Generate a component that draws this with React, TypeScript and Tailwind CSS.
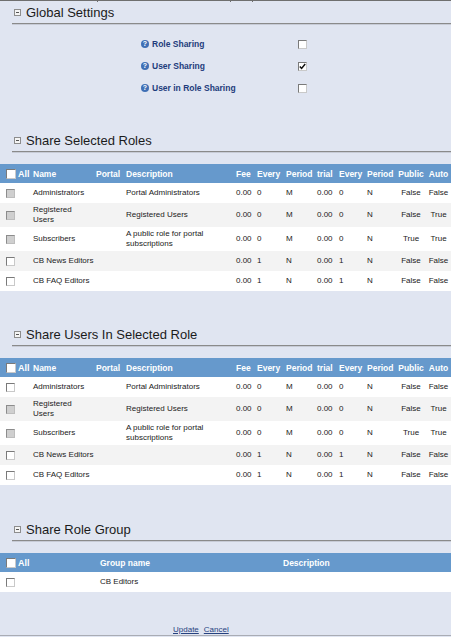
import React from "react";

type Row = {
  name: React.ReactNode;
  desc: React.ReactNode;
  fee: string;
  every: string;
  period: string;
  trial: string;
  tEvery: string;
  tPeriod: string;
  pub: string;
  auto: string;
  disabled: boolean;
};

function Box({ checked = false, disabled = false, big = false }: { checked?: boolean; disabled?: boolean; big?: boolean }) {
  const base = big ? "w-[10px] h-[10px]" : "w-[9px] h-[9px]";
  const color = disabled
    ? "bg-[#cfcfcf] border-t-[#8c8c8c] border-l-[#8c8c8c] border-r-[#bdbdbd] border-b-[#bdbdbd]"
    : "bg-white border-t-[#7a7a7a] border-l-[#7a7a7a] border-r-[#c9c9c9] border-b-[#c9c9c9]";
  return (
    <span className={`inline-flex items-center justify-center border ${base} ${color} align-middle`}>
      {checked && (
        <svg width="7" height="7" viewBox="0 0 7 7">
          <polyline points="0.8,3.4 2.6,5.4 6.2,1" fill="none" stroke="#111" strokeWidth="1.5" />
        </svg>
      )}
    </span>
  );
}

function Heading({ title }: { title: string }) {
  return (
    <div className="ml-[12px] h-[22px] border-b border-[#8a8a8a] shadow-[0_1px_0_#c7cbd6] flex items-center pl-[2px]">
      <span className="w-[7px] h-[7px] border border-[#8d8d8d] bg-[#f4f4f4] flex items-center justify-center">
        <span className="w-[3px] h-px bg-[#555]" />
      </span>
      <span className="ml-[5px] text-[13px] text-[#1b1b1b] leading-none">{title}</span>
    </div>
  );
}

const rolesA: Row[] = [
  { name: "Administrators", desc: "Portal Administrators", fee: "0.00", every: "0", period: "M", trial: "0.00", tEvery: "0", tPeriod: "N", pub: "False", auto: "False", disabled: true },
  { name: <>Registered<br />Users</>, desc: "Registered Users", fee: "0.00", every: "0", period: "M", trial: "0.00", tEvery: "0", tPeriod: "N", pub: "False", auto: "True", disabled: true },
  { name: "Subscribers", desc: <>A public role for portal<br />subscriptions</>, fee: "0.00", every: "0", period: "M", trial: "0.00", tEvery: "0", tPeriod: "N", pub: "True", auto: "True", disabled: true },
  { name: "CB News Editors", desc: "", fee: "0.00", every: "1", period: "N", trial: "0.00", tEvery: "1", tPeriod: "N", pub: "False", auto: "False", disabled: false },
  { name: "CB FAQ Editors", desc: "", fee: "0.00", every: "1", period: "N", trial: "0.00", tEvery: "1", tPeriod: "N", pub: "False", auto: "False", disabled: false },
];

const rolesB: Row[] = rolesA.map((r, i) => (i === 0 ? { ...r, disabled: false } : r));

function RolesTable({ rows }: { rows: Row[] }) {
  const th = "h-[19px] p-0 pl-[2px] text-left text-[8.5px] font-bold text-white whitespace-nowrap align-middle";
  const td = "h-[20px] py-[2px] pl-[2px] pr-0 align-middle whitespace-nowrap";
  return (
    <table className="w-full table-fixed border-collapse text-[8px] leading-[10px] text-[#222]">
      <colgroup>
        <col className="w-[31px]" />
        <col className="w-[63px]" />
        <col className="w-[30px]" />
        <col className="w-[110px]" />
        <col className="w-[21px]" />
        <col className="w-[29px]" />
        <col className="w-[31px]" />
        <col className="w-[22px]" />
        <col className="w-[28px]" />
        <col className="w-[31px]" />
        <col className="w-[30px]" />
        <col className="w-[25px]" />
      </colgroup>
      <thead>
        <tr className="bg-[#6699cc]">
          <th className="h-[19px] p-0 pl-[6px] text-left text-[9px] font-bold text-white align-middle">
            <span className="flex items-center">
              <Box big />
              <span className="ml-[2px]">All</span>
            </span>
          </th>
          <th className={th}>Name</th>
          <th className={th}>Portal</th>
          <th className={th}>Description</th>
          <th className={th}>Fee</th>
          <th className={th}>Every</th>
          <th className={th}>Period</th>
          <th className={th}>trial</th>
          <th className={th}>Every</th>
          <th className={th}>Period</th>
          <th className="h-[19px] p-0 text-center text-[8.5px] font-bold text-white align-middle whitespace-nowrap">Public</th>
          <th className="h-[19px] p-0 text-center text-[8.5px] font-bold text-white align-middle whitespace-nowrap">Auto</th>
        </tr>
      </thead>
      <tbody>
        {rows.map((r, i) => (
          <tr key={i} className={i % 2 === 1 ? "bg-[#f3f3f3]" : "bg-white"}>
            <td className="h-[20px] p-0 pl-[6px] align-middle">
              <span className="flex">
                <Box disabled={r.disabled} />
              </span>
            </td>
            <td className={td}>{r.name}</td>
            <td className={td}></td>
            <td className={td}>{r.desc}</td>
            <td className={td}>{r.fee}</td>
            <td className={td}>{r.every}</td>
            <td className={td}>{r.period}</td>
            <td className={td}>{r.trial}</td>
            <td className={td}>{r.tEvery}</td>
            <td className={td}>{r.tPeriod}</td>
            <td className="h-[20px] p-0 text-center align-middle">{r.pub}</td>
            <td className="h-[20px] p-0 text-center align-middle">{r.auto}</td>
          </tr>
        ))}
      </tbody>
    </table>
  );
}

function Help() {
  return (
    <span className="w-[8px] h-[8px] rounded-full bg-[#3f6fb5] text-white text-[7px] leading-[8px] font-bold flex items-center justify-center">
      ?
    </span>
  );
}

function SettingRow({ label, checked }: { label: string; checked?: boolean }) {
  return (
    <div className="h-[22px] flex items-center pl-[141px]">
      <div className="w-[157px] flex items-center">
        <Help />
        <span className="ml-[3px] text-[8.5px] font-bold text-[#1e3c7c]">{label}</span>
      </div>
      <Box checked={checked} />
    </div>
  );
}

export default function App() {
  return (
    <div
      className="w-full h-[637px] bg-[#e0e5f1] flex flex-col overflow-hidden"
      style={{ fontFamily: '"Liberation Sans", Arial, sans-serif' }}
    >
      <div className="h-px bg-[#6f6f6f]" />
      <div className="h-px flex">
        <div className="w-[97px]" />
        <div className="w-px bg-[#6f6f6f]" />
        <div className="w-[132px]" />
        <div className="w-px bg-[#6f6f6f]" />
        <div className="w-[21px]" />
        <div className="w-px bg-[#6f6f6f]" />
      </div>
      <Heading title="Global Settings" />
      <div className="pt-[9px]">
        <SettingRow label="Role Sharing" />
        <SettingRow label="User Sharing" checked />
        <SettingRow label="User in Role Sharing" />
      </div>

      <div className="mt-[31px]">
        <Heading title="Share Selected Roles" />
      </div>
      <div className="mt-[12px]">
        <RolesTable rows={rolesA} />
      </div>

      <div className="mt-[33px]">
        <Heading title="Share Users In Selected Role" />
      </div>
      <div className="mt-[12px]">
        <RolesTable rows={rolesB} />
      </div>

      <div className="mt-[34px]">
        <Heading title="Share Role Group" />
      </div>
      <div className="mt-[12px]">
        <table className="w-full table-fixed border-collapse text-[8px] leading-[10px] text-[#222]">
          <colgroup>
            <col className="w-[98px]" />
            <col className="w-[183px]" />
            <col />
          </colgroup>
          <thead>
            <tr className="bg-[#6699cc]">
              <th className="h-[19px] p-0 pl-[6px] text-left text-[9px] font-bold text-white align-middle">
                <span className="flex items-center">
                  <Box big />
                  <span className="ml-[2px]">All</span>
                </span>
              </th>
              <th className="h-[19px] p-0 pl-[2px] text-left text-[8.5px] font-bold text-white align-middle">Group name</th>
              <th className="h-[19px] p-0 pl-[2px] text-left text-[8.5px] font-bold text-white align-middle">Description</th>
            </tr>
          </thead>
          <tbody>
            <tr className="bg-white">
              <td className="h-[20px] p-0 pl-[6px] align-middle">
                <span className="flex">
                  <Box />
                </span>
              </td>
              <td className="h-[20px] p-0 pl-[2px] align-middle">CB Editors</td>
              <td className="h-[20px] p-0 pl-[2px] align-middle"></td>
            </tr>
          </tbody>
        </table>
      </div>

      <div className="mt-[33px] h-[10px] pl-[173px] flex items-center text-[8px] leading-[10px]">
        <a className="text-[#26427f] underline">Update</a>
        <a className="ml-[5px] text-[#26427f] underline">Cancel</a>
      </div>
      <div className="h-px bg-[#a9acb4]" />
    </div>
  );
}
